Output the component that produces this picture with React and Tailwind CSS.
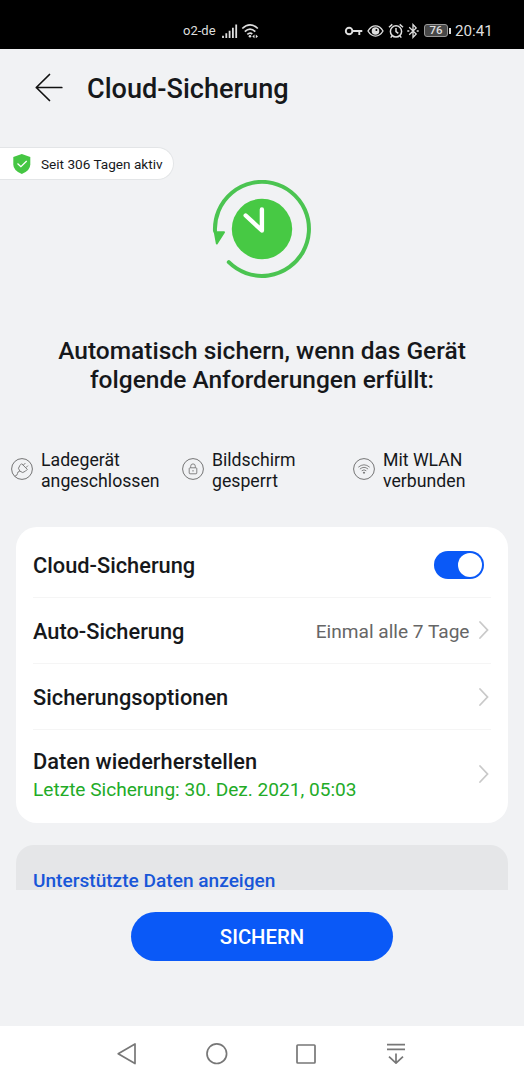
import { useState } from 'react';

function StatusBar() {
  return (
    <div className="flex h-[49px] shrink-0 items-center bg-black pt-[13px] pr-[31px] pl-[183px] text-[#dedede]">
      <span className="w-[39px] text-[13px] whitespace-nowrap">o2-de</span>
      <svg className="h-[16px] w-[16px] shrink-0" viewBox="0 0 16 16" fill="none" stroke="currentColor" strokeWidth="1.8">
        <path d="M1 15v-2.3M4.3 15v-4.8M7.6 15V7.8M10.9 15V4.8M14.2 15V1.5" />
      </svg>
      <svg className="ml-[3px] h-[16px] w-[20px] shrink-0" viewBox="0 0 20 16" fill="none" stroke="currentColor" strokeWidth="1.7">
        <path d="M1.3 5.5Q9 -1.8 16.8 5.5M3.8 8.6Q9 3.8 14.3 8.6M6.3 11.4Q9 9 11.3 11" />
        <circle cx="9" cy="13.2" r="1.3" fill="currentColor" stroke="none" />
        <path d="M11.3 13.4l2.2-1.8v3.6zM17 13.4l-2.2-1.8v3.6z" fill="currentColor" stroke="none" />
      </svg>
      <div className="ml-auto flex items-center">
        <svg className="h-[16px] w-[19px]" viewBox="0 0 19 16" fill="none" stroke="currentColor" strokeWidth="1.9">
          <circle cx="5.1" cy="8" r="3.3" />
          <path d="M8.5 8h9.8M15.3 8v4" />
        </svg>
        <svg className="ml-[4px] h-[16px] w-[17px]" viewBox="0 0 17 16" fill="none" stroke="currentColor" strokeWidth="1.4">
          <path d="M1 8Q4 2.9 8.5 2.9T16 8Q13 13.1 8.5 13.1T1 8z" />
          <circle cx="8.5" cy="8" r="3.1" fill="currentColor" />
          <circle cx="9.4" cy="7" r="1" fill="#000" stroke="none" />
        </svg>
        <svg className="ml-[4px] h-[16px] w-[16px]" viewBox="0 0 16 16" fill="none" stroke="currentColor" strokeWidth="1.5">
          <circle cx="8" cy="8.4" r="5.6" />
          <path d="M1 4.3L4.3 1.4M15 4.3l-3.3-2.9M8 5v3.6l2.3 1.8M4.2 12.6l-1.5 2M11.8 12.6l1.5 2" />
        </svg>
        <svg className="ml-[3px] h-[16px] w-[12px]" viewBox="0 0 12 16" fill="none" stroke="currentColor" strokeWidth="1.3">
          <path d="M2.2 4.3l7 6.7L6 14.4V1.6L9.2 5l-7 6.7" />
          <path d="M.3 8h2M9.7 8h2" strokeWidth="1.7" />
        </svg>
        <div className="ml-[5px] flex h-[13px] w-[24px] items-center justify-center rounded-[3px] border border-[#999] bg-[#484848] text-[11.5px] leading-none font-medium">76</div>
        <span className="ml-px h-[6px] w-[2px] bg-[#dedede]" />
        <span className="mt-px ml-[4px] w-[38px] text-[15.2px] whitespace-nowrap">20:41</span>
      </div>
    </div>
  );
}

function BackupClock() {
  return (
    <svg className="mx-auto block h-[100px] w-[100px] shrink-0" viewBox="0 0 100 100" fill="none" strokeLinecap="round" strokeLinejoin="round">
      <path d="M3 51A47 47 0 1 1 16.8 82.2" stroke="#4bc451" strokeWidth="4" />
      <path d="M2.8 52.3h9.2L4.8 63.4z" fill="#47c649" stroke="#47c649" strokeWidth="2" />
      <circle cx="50" cy="49" r="30.2" fill="#47c944" />
      <path d="M49.9 29.5v21L33.7 35.5" stroke="#fff" strokeWidth="4.4" />
    </svg>
  );
}

function PlugIcon() {
  return (
    <g transform="rotate(45 11 11)">
      <path d="M7 7.5h8v2.5a4 4 0 0 1-8 0zM9.2 7.3V4.4M12.8 7.3V4.4M11 14.2q-1.4 2 0 3.2t0 4" />
    </g>
  );
}

function LockIcon() {
  return (
    <>
      <rect x="7.2" y="9.8" width="7.6" height="6" rx=".8" />
      <path d="M8.7 9.8V8.2a2.3 2.3 0 0 1 4.6 0v1.6M11 12v1.6" />
    </>
  );
}

function WlanIcon() {
  return (
    <>
      <path d="M5.3 9.2q5.7-4.8 11.4 0M6.9 11.1q4.1-3.5 8.2 0M8.7 12.8q2.3-1.9 4.6 0" />
      <circle cx="11" cy="14.7" r=".6" fill="currentColor" />
    </>
  );
}

const conditions = [
  { Icon: PlugIcon, lines: ['Ladegerät', 'angeschlossen'] },
  { Icon: LockIcon, lines: ['Bildschirm', 'gesperrt'] },
  { Icon: WlanIcon, lines: ['Mit WLAN', 'verbunden'] },
];

function Chevron() {
  return (
    <svg className="mr-px h-[20px] w-[12px] shrink-0" viewBox="0 0 12 20" fill="none" stroke="#c9c9c9" strokeWidth="1.8" strokeLinecap="round">
      <path d="M2 2l7.5 8L2 18" />
    </svg>
  );
}

function Row({ title, children }) {
  return (
    <div className="flex h-[66px] items-center border-b border-[#f5f5f5]">
      <span className="pt-[3px] text-[21.8px] font-medium whitespace-nowrap">{title}</span>
      <div className="ml-auto flex items-center">{children}</div>
    </div>
  );
}

function NavBar() {
  return (
    <div className="flex h-[54px] shrink-0 items-center justify-between bg-white pt-px pr-[116px] pl-[115px] text-[#777]">
      {[
        <path key="back" d="M20 2v19.6L3.2 11.8z" />,
        <circle key="home" cx="11.8" cy="11.7" r="9.8" />,
        <rect key="recent" x="3" y="3" width="18" height="18" rx=".8" />,
        <path key="drop" d="M3 2.6h18M3 7.4h18M12 11.5v9.5M5 14.6l7 6.6 7-6.6" />,
      ].map((shape) => (
        <svg key={shape.key} className="h-[24px] w-[24px]" viewBox="0 0 24 24" fill="none" stroke="currentColor" strokeWidth="1.7" strokeLinejoin="round">
          {shape}
        </svg>
      ))}
    </div>
  );
}

export default function App() {
  const [enabled, setEnabled] = useState(true);

  return (
    <div className="flex h-[1080px] w-[524px] flex-col overflow-hidden bg-[#f1f2f4] font-[Roboto,sans-serif] text-[#16181b]">
      <StatusBar />

      <main className="flex h-[841px] shrink-0 flex-col overflow-hidden">
        <header className="flex h-[98px] shrink-0 items-start pt-[22px] pl-[35px]">
          <svg className="mt-[2px] h-[30px] w-[29px]" viewBox="0 0 29 30" fill="none" stroke="#111" strokeWidth="1.7" strokeLinecap="round" strokeLinejoin="round">
            <path d="M14.5 1.5L1.3 14.5l13.2 13M1.3 14.5h25.5" />
          </svg>
          <h1 className="mt-px ml-[23px] text-[27.1px] leading-[34px] font-medium whitespace-nowrap">Cloud-Sicherung</h1>
        </header>

        <div className="flex h-[33px] w-[174px] shrink-0 items-center rounded-r-full border border-l-0 border-[#e3e5e7] bg-white pl-[13px]">
          <svg className="h-[20px] w-[18px]" viewBox="0 0 18 20">
            <path d="M8.8 0L17.3 3v7.5q0 6-8.5 9.5Q.3 16.5 .3 10.5V3z" fill="#45c643" />
            <path d="M4.5 9.5l3.4 3.2 5.8-5.7" fill="none" stroke="#fff" strokeWidth="1.3" />
          </svg>
          <span className="mt-px ml-[10px] text-[13.6px] whitespace-nowrap">Seit 306 Tagen aktiv</span>
        </div>

        <BackupClock />

        <h2 className="mt-[56px] text-center text-[24.5px] leading-[29px] font-medium whitespace-nowrap">
          Automatisch sichern, wenn das Gerät
          <br />
          folgende Anforderungen erfüllt:
        </h2>

        <div className="mt-[56px] grid shrink-0 grid-cols-[171px_171px_171px] pl-[11px]">
          {conditions.map(({ Icon, lines }) => (
            <div key={lines[0]} className="flex items-start">
              <svg className="mt-[8px] h-[22px] w-[22px] shrink-0" viewBox="0 0 22 22" fill="none" stroke="#777" strokeWidth=".9">
                <circle cx="11" cy="11" r="10.4" stroke="#666" />
                <Icon />
              </svg>
              <p className="ml-2 text-[17.7px] leading-[21px] whitespace-nowrap">
                {lines[0]}
                <br />
                {lines[1]}
              </p>
            </div>
          ))}
        </div>

        <section className="mx-4 mt-[35px] h-[296px] shrink-0 rounded-[21px] bg-white pt-[5px] pr-[17px] pl-[17px]">
          <Row title="Cloud-Sicherung">
            <button
              role="switch"
              aria-checked={enabled}
              aria-label="Cloud-Sicherung"
              onClick={() => setEnabled(!enabled)}
              className={`mr-[7.5px] flex h-[28px] w-[50px] items-center rounded-full p-[2px] ${enabled ? 'justify-end bg-[#0a59f7]' : 'justify-start bg-gray-300'}`}
            >
              <span className="h-[24px] w-[24px] rounded-full bg-white" />
            </button>
          </Row>
          <Row title="Auto-Sicherung">
            <span className="mr-[8.5px] pt-[3px] text-[19.1px] whitespace-nowrap text-[#666]">Einmal alle 7 Tage</span>
            <Chevron />
          </Row>
          <Row title="Sicherungsoptionen">
            <Chevron />
          </Row>
          <div className="flex h-[87px] items-center justify-between">
            <div className="pt-[4px]">
              <p className="text-[21.8px] leading-[28px] font-medium whitespace-nowrap">Daten wiederherstellen</p>
              <p className="text-[19.1px] leading-[27px] whitespace-nowrap text-[#22ab27]">Letzte Sicherung: 30. Dez. 2021, 05:03</p>
            </div>
            <Chevron />
          </div>
        </section>

        <section className="mx-4 mt-[22px] grow rounded-t-[18px] bg-[#e5e6e8] pt-[22px] pl-[17px]">
          <a className="block text-[19.1px] leading-[27px] font-medium whitespace-nowrap text-[#1856d8]">Unterstützte Daten anzeigen</a>
        </section>
      </main>

      <footer className="h-[136px] shrink-0 pt-[22px]">
        <button className="mx-auto block h-[49px] w-[262px] rounded-full bg-[#0a59f7] pt-[2px] text-[20.3px] font-medium text-white">SICHERN</button>
      </footer>

      <NavBar />
    </div>
  );
}
